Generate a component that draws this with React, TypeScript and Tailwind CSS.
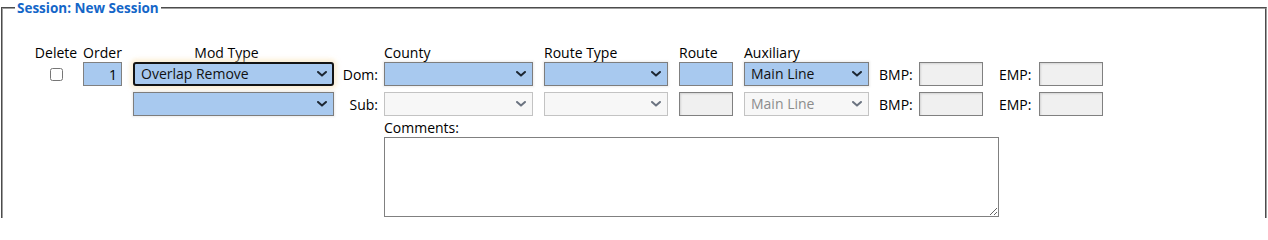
import React from 'react';

const font = { fontFamily: '"Open Sans", "Noto Sans", sans-serif' };

const Chevron = ({ muted }: { muted?: boolean }) => (
  <svg
    width="10"
    height="6"
    viewBox="0 0 10 6"
    className="pointer-events-none absolute right-[7px] top-1/2 -translate-y-1/2"
  >
    <path
      d="M1 1l4 3.6L9 1"
      fill="none"
      stroke={muted ? '#6b7380' : '#1d2733'}
      strokeWidth="2"
      strokeLinecap="round"
      strokeLinejoin="round"
    />
  </svg>
);

const Select = ({
  width,
  value,
  disabled,
  focused,
}: {
  width: string;
  value?: string;
  disabled?: boolean;
  focused?: boolean;
}) => {
  const base =
    'h-[24px] appearance-none pl-[6px] pr-6 text-[14px] leading-[20px] outline-none';
  const look = disabled
    ? 'bg-[#f7f7f7] border border-[#c3c3c3] text-[#8c8c8c]'
    : focused
      ? 'bg-[#a8c9ef] border-2 border-[#141414] rounded-[3px] pl-[5px] text-[#111] shadow-[0_0_4px_3px_rgba(250,226,182,0.55)]'
      : 'bg-[#a8c9ef] border border-[#7d7d7d] text-[#111] shadow-[0_0_2px_1px_rgba(0,0,0,0.08)]';
  return (
    <div className={`relative ${width}`}>
      <select disabled={disabled} className={`${base} ${look} w-full`} style={font} defaultValue={value ?? ''}>
        <option value={value ?? ''}>{value ?? ''}</option>
      </select>
      <Chevron muted={disabled} />
    </div>
  );
};

const Box = ({ width, blue }: { width: string; blue?: boolean }) => (
  <input
    type="text"
    className={`${width} h-[24px] border border-[#808080] outline-none ${
      blue ? 'bg-[#a8c9ef]' : 'bg-[#f0f0f0] shadow-[inset_1px_1px_2px_rgba(0,0,0,0.12)]'
    }`}
  />
);

export default function App() {
  return (
    <div className="w-[1268px] h-[218px] overflow-hidden bg-white text-[14px] text-black" style={font}>
      <fieldset className="mx-[1px] border-2 border-[#a0a0a0] [border-style:groove] h-[240px]">
        <legend className="ml-[12px] px-[2px] text-[13.5px] font-bold leading-[16px] text-[#1466c8]">
          Session: New Session
        </legend>

        <div className="pt-[28px] pl-[30px]">
          {/* column headings */}
          <div className="flex items-end leading-[18px]">
            <div className="w-[46px] text-center">Delete</div>
            <div className="w-[39px] ml-[4px] text-center">Order</div>
            <div className="w-[201px] ml-[11px] pr-[14px] text-center">Mod Type</div>
            <div className="w-[50px]" />
            <div className="w-[149px]">County</div>
            <div className="w-[124px] ml-[11px]">Route Type</div>
            <div className="w-[54px] ml-[11px]">Route</div>
            <div className="w-[125px] ml-[11px]">Auxiliary</div>
          </div>

          {/* dom row */}
          <div className="flex items-center">
            <div className="w-[46px] flex justify-center">
              <input type="checkbox" className="w-[13px] h-[13px] m-0" />
            </div>
            <input
              type="text"
              defaultValue="1"
              className="w-[39px] ml-[4px] h-[24px] border border-[#808080] bg-[#a8c9ef] text-right pr-[4px] text-[14px] outline-none"
              style={font}
            />
            <div className="ml-[11px]">
              <Select width="w-[201px]" value="Overlap Remove" focused />
            </div>
            <div className="w-[50px] text-right pr-[6px]">Dom:</div>
            <Select width="w-[149px]" />
            <div className="ml-[11px]">
              <Select width="w-[124px]" />
            </div>
            <div className="ml-[11px]">
              <Box width="w-[54px]" blue />
            </div>
            <div className="ml-[11px]">
              <Select width="w-[125px]" value="Main Line" />
            </div>
            <div className="w-[50px] pl-[10px]">BMP:</div>
            <Box width="w-[64px]" />
            <div className="w-[56px] pl-[16px]">EMP:</div>
            <Box width="w-[64px]" />
          </div>

          {/* sub row */}
          <div className="flex items-center mt-[6px]">
            <div className="w-[46px]" />
            <div className="w-[39px] ml-[4px]" />
            <div className="ml-[11px]">
              <Select width="w-[201px]" />
            </div>
            <div className="w-[50px] text-right pr-[6px]">Sub:</div>
            <Select width="w-[149px]" disabled />
            <div className="ml-[11px]">
              <Select width="w-[124px]" disabled />
            </div>
            <div className="ml-[11px]">
              <Box width="w-[54px]" />
            </div>
            <div className="ml-[11px]">
              <Select width="w-[125px]" value="Main Line" disabled />
            </div>
            <div className="w-[50px] pl-[10px]">BMP:</div>
            <Box width="w-[64px]" />
            <div className="w-[56px] pl-[16px]">EMP:</div>
            <Box width="w-[64px]" />
          </div>

          {/* comments */}
          <div className="ml-[351px] mt-[3px]">
            <div className="leading-[18px]">Comments:</div>
            <textarea className="block w-[615px] h-[80px] border border-[#808080] bg-white outline-none" />
          </div>
        </div>
      </fieldset>
    </div>
  );
}
